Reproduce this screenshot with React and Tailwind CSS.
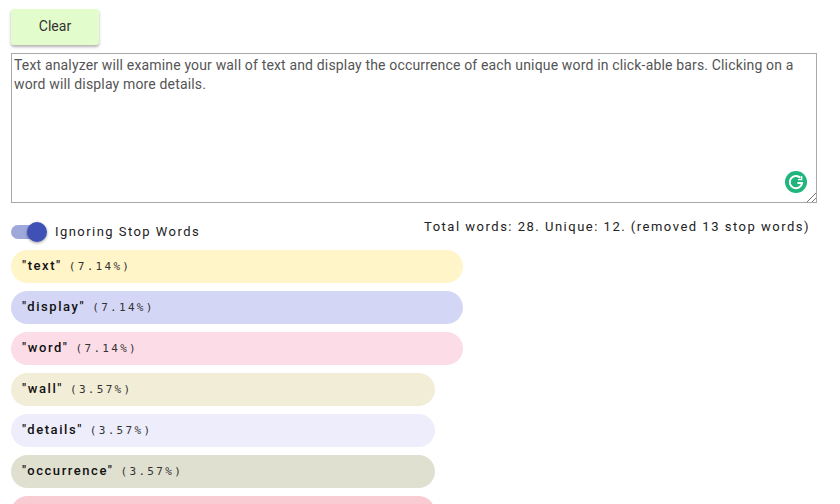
const WORDS = [
  { word: "text", pct: "7.14", color: "bg-[#fff5c9]", width: "w-[452px]" },
  { word: "display", pct: "7.14", color: "bg-[#d4d6f6]", width: "w-[452px]" },
  { word: "word", pct: "7.14", color: "bg-[#fcdde7]", width: "w-[452px]" },
  { word: "wall", pct: "3.57", color: "bg-[#f2edd7]", width: "w-[424px]" },
  { word: "details", pct: "3.57", color: "bg-[#eeedfb]", width: "w-[424px]" },
  { word: "occurrence", pct: "3.57", color: "bg-[#e0e0d1]", width: "w-[424px]" },
];

const GrammarlyBadge = () => (
  <svg viewBox="0 0 22 22" className="absolute right-[9px] bottom-[9px] h-[22px] w-[22px]">
    <circle cx="11" cy="11" r="11" fill="#1fb57c" />
    <path d="M15.4 6.8A6.2 6.2 0 1 0 17.1 12H12.4" fill="none" stroke="#fff" strokeWidth="2" />
    <path d="M13 8.6L16.6 8.6L16.6 5" fill="none" stroke="#fff" strokeWidth="1.4" />
  </svg>
);

export default function App() {
  return (
    <div className="h-[504px] overflow-hidden bg-white px-[11px] pt-[9px] font-['Roboto',sans-serif] text-black">
      <button className="h-9 w-[88px] rounded-[3px] bg-[#e3fccb] pb-0.5 text-sm text-[#333] shadow-[0_2px_3px_rgba(0,0,0,0.3)]">
        Clear
      </button>

      <div className="relative mt-2 h-[150px] w-[806px] border border-[#a9a9a9] px-0.5 py-0.5 text-sm leading-[19px] tracking-[0.16px] text-[#555]">
        Text analyzer will examine your wall of text and display the occurrence of each unique word in click-able bars. Clicking on a word will display more details.
        <GrammarlyBadge />
        <svg viewBox="0 0 10 10" className="absolute right-0 bottom-0 h-2.5 w-2.5">
          <path d="M1 10L10 1M6 10L10 6" stroke="#777" strokeWidth="1" />
        </svg>
      </div>

      <div className="mt-[12px] flex h-[35px] w-[799px] items-start justify-between">
        <div className="mt-[7px] flex items-center">
          <div className="relative h-[14px] w-[34px] rounded-full bg-[#9fa8da]">
            <div className="absolute top-[-3px] right-[-2px] h-5 w-5 rounded-full bg-[#3f51b5] shadow-[0_1px_3px_rgba(0,0,0,0.4)]" />
          </div>
          <span className="ml-2.5 text-[13px] tracking-[1.45px] text-[#222]">Ignoring Stop Words</span>
        </div>
        <div className="mt-[2px] text-[13px] tracking-[1.5px] text-[#222]">
          Total words: 28. Unique: 12. (removed 13 stop words)
        </div>
      </div>

      <div className="flex flex-col gap-2">
        {WORDS.map((item) => (
          <div key={item.word} className={`flex h-[33px] shrink-0 items-center rounded-full px-[11px] pb-0.5 ${item.color} ${item.width}`}>
            <span className="text-[13px] font-medium tracking-[1.55px] text-[#111]">"{item.word}"</span>
            <span className="mt-[3px] ml-[7px] font-['DejaVu_Sans_Mono',monospace] text-[11px] tracking-[2.3px] text-[#333]">({item.pct}%)</span>
          </div>
        ))}
        {/* next bar is cut by the window, its label falls below the fold */}
        <div className="h-[33px] w-[424px] shrink-0 rounded-full bg-[#f9ccd3]" />
      </div>
    </div>
  );
}
